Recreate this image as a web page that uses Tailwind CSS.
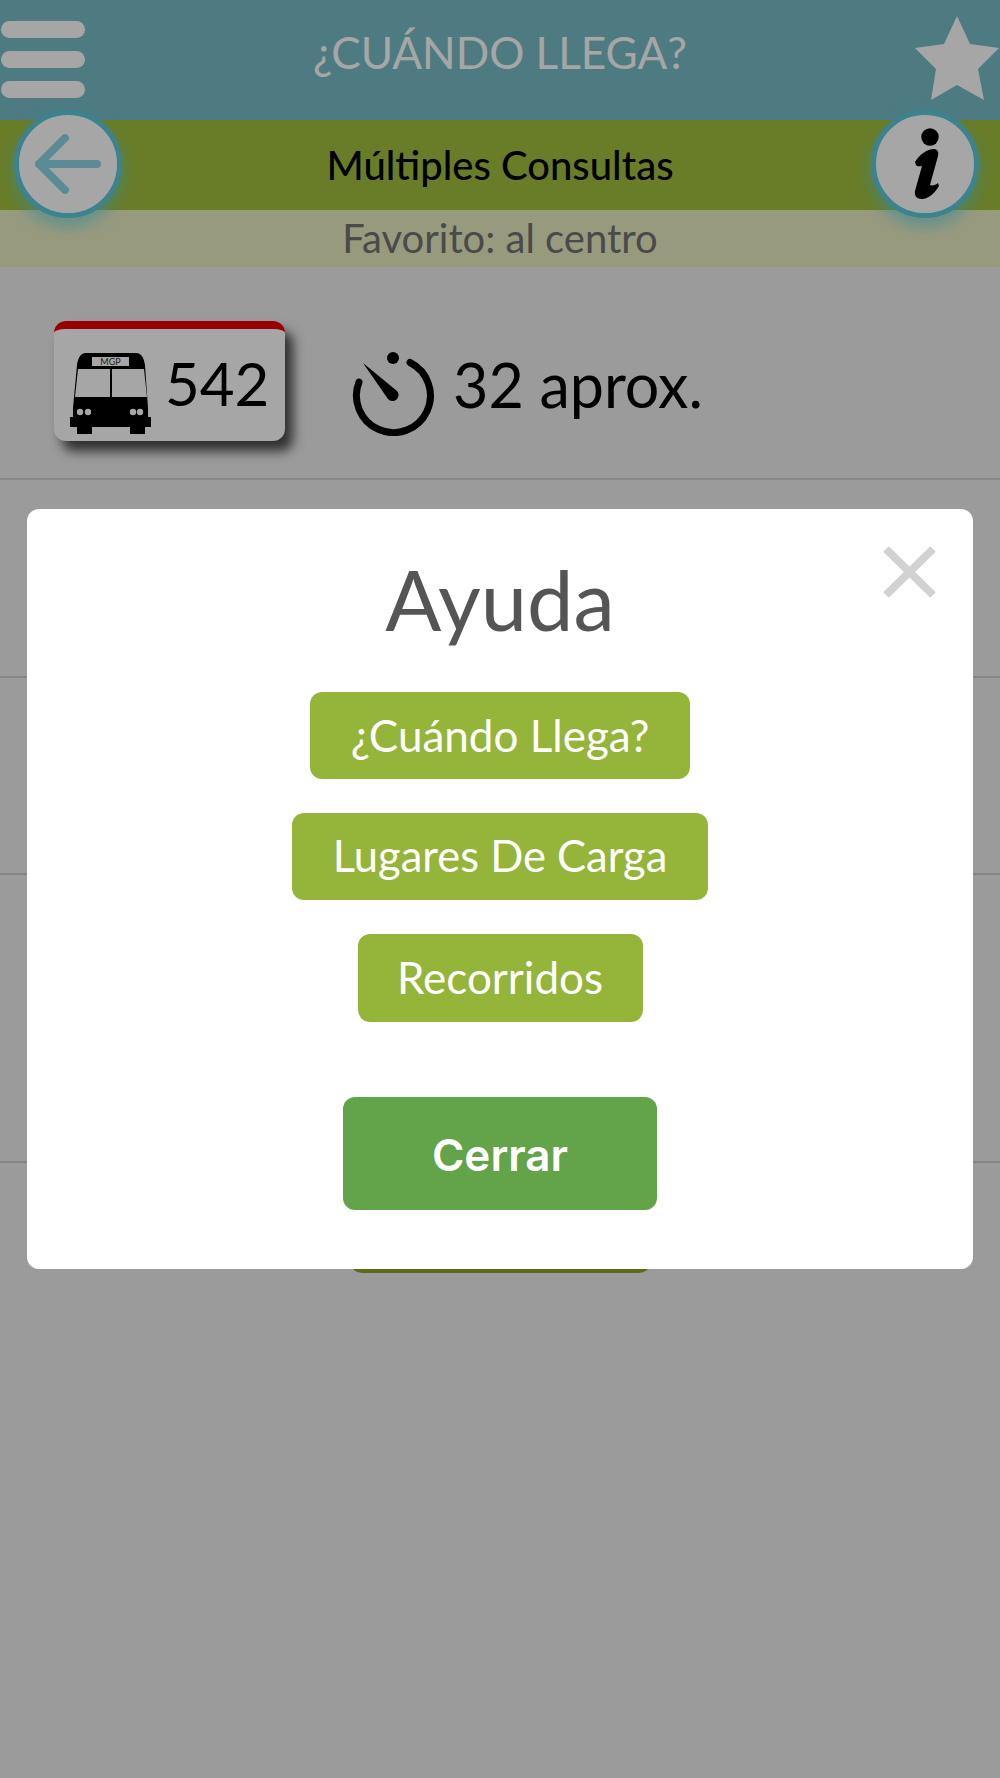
<!DOCTYPE html>
<html lang="es">
<head>
    <meta charset="UTF-8">
    <meta name="viewport" content="width=device-width, initial-scale=1.0">
    <script src="https://cdn.jsdelivr.net/npm/@tailwindcss/browser@4"></script>
    <title>¿Cuándo Llega?</title>
</head>
<body class="font-['Lato',sans-serif]">
    <div class="relative h-[1778px] w-[1000px] overflow-hidden bg-[#eeeeee]">
        <!-- header -->
        <header class="flex h-[120px] items-start justify-between bg-[#78bdc8] text-white">
            <div class="flex w-[85px] flex-col gap-[13px] pl-px pt-[21px]">
                <span class="h-[17px] rounded-full bg-white"></span>
                <span class="h-[17px] rounded-full bg-white"></span>
                <span class="h-[17px] rounded-full bg-white"></span>
            </div>
            <h1 class="pt-[25px] text-[44px] leading-[54px]">¿CUÁNDO LLEGA?</h1>
            <svg class="mt-4 h-[84px] w-[85px]" viewBox="0 0 85 84" fill="#fff">
                <polygon points="42,0 55,28 84,32 63,53 69,84 42,69 16,84 21,53 0,32 29,28"/>
            </svg>
        </header>
        <div class="flex h-[90px] items-center justify-center bg-[#a2c03e] pb-[1px] text-[40px] font-medium text-black">Múltiples Consultas</div>
        <div class="flex h-[57px] items-center justify-center bg-[#eaedc2] pb-[2px] text-[40px] text-[#727272]">Favorito: al centro</div>

        <!-- round buttons over the bars -->
        <button class="absolute left-[14px] top-[110px] flex h-[108px] w-[108px] items-center justify-center rounded-full border-[5px] border-[#5cc8dc] bg-white shadow-[0_8px_16px_rgba(89,208,231,0.6)]">
            <svg class="h-[60px] w-[66px]" viewBox="0 0 66 60" fill="none" stroke="#8cd8e6" stroke-width="8" stroke-linecap="round" stroke-linejoin="round">
                <path d="M62 30H4M30 4L4 30l26 26"/>
            </svg>
        </button>
        <button class="absolute left-[871px] top-[110px] flex h-[108px] w-[108px] items-center justify-center rounded-full border-[5px] border-[#5cc8dc] bg-white pl-1 shadow-[0_8px_16px_rgba(89,208,231,0.6)]">
            <svg class="h-[72px] w-[26px]" viewBox="0 0 26 72" fill="#000">
                <circle cx="16" cy="9" r="8.7"/>
                <path d="M1 34C5 27 13 21 20 21C24 21 25 25 24 28L16 57C18 58 22 57 24 55L25 58C21 65 14 71 8 71C3 71 0 68 1 63L8 38C6 38 3 39 2 37Z"/>
            </svg>
        </button>

        <!-- arrivals -->
        <div class="flex h-[213px] items-start border-b-2 border-[#cfcfcf] pl-[54px] pt-[54px]">
            <div class="flex h-[120px] w-[231px] items-center gap-[13px] rounded-xl border-t-[8px] border-[#ec0000] bg-white pl-4 shadow-[8px_10px_12px_rgba(0,0,0,0.7)]">
                <svg class="mb-[7px] h-[81px] w-[82px] shrink-0 self-end" viewBox="0 0 82 81">
                    <path fill="#000" d="M16 0H66C72 0 74 6 75 12L78 55V64H81V74H75V81H60V74H22V81H7V74H0V64H3V55L7 12C8 6 10 0 16 0Z"/>
                    <rect x="22" y="4" width="37" height="9" fill="#fff"/>
                    <text x="40.5" y="12" font-size="9" text-anchor="middle" fill="#333">MGP</text>
                    <path fill="#fff" d="M8 16H40V44H5ZM42 16H74L77 44H42Z"/>
                    <circle cx="10" cy="59" r="3.2" fill="#fff"/><circle cx="18" cy="59" r="3.2" fill="#fff"/>
                    <circle cx="63" cy="59" r="3.2" fill="#fff"/><circle cx="70" cy="59" r="3.2" fill="#fff"/>
                </svg>
                <span class="mb-[5px] text-[60px] leading-none text-black">542</span>
            </div>
            <svg class="ml-[67px] mt-[31px] h-[84px] w-[84px] shrink-0" viewBox="0 0 84 84" fill="none">
                <path d="M58 10.5A37 37 0 1 1 7 30" stroke="#000" stroke-width="7" stroke-linecap="round"/>
                <circle cx="41" cy="6" r="6" fill="#000"/>
                <path d="M11 11L45 39A6 6 0 0 1 36 47Z" fill="#000"/>
            </svg>
            <span class="ml-[17px] mt-[33px] text-[61px] leading-none text-black">32 aprox.</span>
        </div>
        <div class="h-[198px] border-b-2 border-[#cfcfcf]"></div>
        <div class="h-[197px] border-b-2 border-[#cfcfcf]"></div>
        <div class="h-[288px] border-b-2 border-[#cfcfcf]"></div>
        <div class="mx-auto mt-[50px] h-[60px] w-[301px] rounded-xl bg-[#8aa52c]"></div>

        <!-- modal -->
        <div class="absolute inset-0 bg-black/35 pt-[509px]">
            <div class="relative mx-auto flex h-[760px] w-[946px] flex-col items-center rounded-xl bg-white pt-[45px]">
                <svg class="absolute left-[856px] top-[37px] h-[52px] w-[53px]" viewBox="0 0 53 52" stroke="#d2d2d2" stroke-width="8">
                    <path d="M3 3l47 46M50 3L3 49"/>
                </svg>
                <h2 class="text-[83px] leading-[90px] text-[#555]">Ayuda</h2>
                <div class="mt-[48px] flex flex-col items-center gap-[34px] text-[44px] text-white">
                    <button class="h-[87px] w-[380px] rounded-xl bg-[#95b53a] pb-[2px]">¿Cuándo Llega?</button>
                    <button class="h-[87px] w-[416px] rounded-xl bg-[#95b53a] pb-[2px] text-[43.5px]">Lugares De Carga</button>
                    <button class="h-[88px] w-[285px] rounded-xl bg-[#95b53a] pb-[2px]">Recorridos</button>
                </div>
                <button class="mt-[75px] h-[113px] w-[314px] rounded-xl bg-[#63a44b] pt-[3px] font-['Inter',sans-serif] text-[44px] font-semibold text-white">Cerrar</button>
            </div>
        </div>
    </div>
</body>
</html>
